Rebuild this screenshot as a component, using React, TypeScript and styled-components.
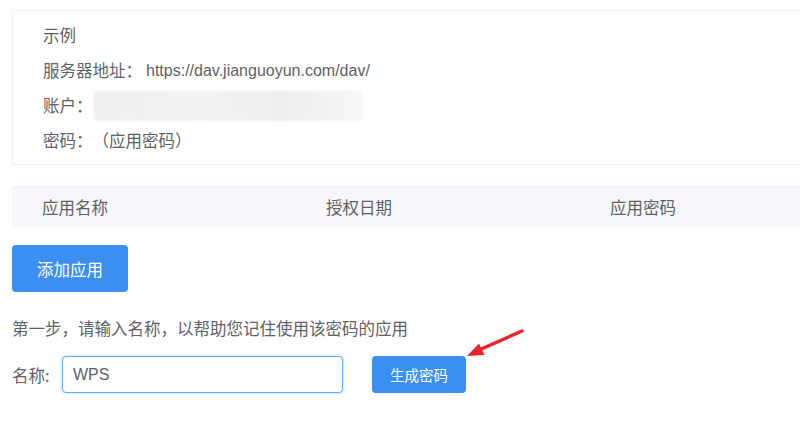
import React from "react";
import styled, { createGlobalStyle } from "styled-components";

const GlobalStyle = createGlobalStyle`
  html, body {
    margin: 0;
    padding: 0;
    background: #fff;
    overflow: hidden;
  }
  body {
    font-family: "Noto Sans CJK SC", "Noto Sans", "Liberation Sans", sans-serif;
    color: #606266;
    text-spacing-trim: space-all;
  }
`;

const App: React.FC = () => {
  return (
    <>
      <GlobalStyle />
      <Page>
        <ExampleBox>
          <Line>示例</Line>
          <Line>
            服务器地址：<Url>https://dav.jianguoyun.com/dav/</Url>
          </Line>
          <Line>
            账户：<Blurred />
          </Line>
          <Line>密码：（应用密码）</Line>
        </ExampleBox>

        <TableHead>
          {columns.map((c) => (
            <HeadCell key={c}>{c}</HeadCell>
          ))}
        </TableHead>

        <AddButton>添加应用</AddButton>

        <StepText>第一步，请输入名称，以帮助您记住使用该密码的应用</StepText>

        <NameRow>
          <Label>名称:</Label>
          <NameInput defaultValue="WPS" />
          <GenButton>生成密码</GenButton>
          <Arrow width="70" height="40" viewBox="0 0 70 40">
            <line x1="60" y1="5" x2="17" y2="24" stroke="#e8242b" strokeWidth="3.5" strokeLinecap="round" />
            <polygon points="5,30 17,17.5 22.5,29" fill="#e8242b" />
          </Arrow>
        </NameRow>
      </Page>
    </>
  );
};

const columns = ["应用名称", "授权日期", "应用密码"];

const Page = styled.div`
  width: 800px;
  height: 436px;
  padding: 10px 0 0 12px;
  box-sizing: border-box;
  overflow: hidden;
  display: flex;
  flex-direction: column;
  align-items: flex-start;
  font-size: 16.5px;
`;

const ExampleBox = styled.div`
  width: 820px;
  box-sizing: border-box;
  border: 1px solid #eff0f2;
  border-radius: 2px;
  padding: 7px 30px 6px;
`;

const Line = styled.div`
  height: 35px;
  line-height: 35px;
  display: flex;
  align-items: center;
`;

const Url = styled.span`
  margin-left: 4px;
  font-family: "Liberation Sans", Arial, sans-serif;
  font-size: 16px;
`;

const Blurred = styled.span`
  display: inline-block;
  width: 269px;
  height: 30px;
  margin-left: 1px;
  background: linear-gradient(90deg, #efeff1, #f3f3f5 40%, #eeeef0 70%, #f7f7f8);
  filter: blur(1px);
`;

const TableHead = styled.div`
  margin-top: 21px;
  width: 852px;
  height: 39px;
  background: #f5f7fa;
  border-top: 1px solid #eef0f3;
  display: grid;
  grid-template-columns: repeat(3, 284px);
  align-items: center;
`;

const HeadCell = styled.div`
  padding-left: 30px;
  color: #606266;
`;

const AddButton = styled.button`
  margin-top: 19px;
  width: 116px;
  height: 47px;
  border: none;
  border-radius: 4px;
  background: #3a8ff0;
  color: #fff;
  font-family: inherit;
  font-size: 16.5px;
`;

const StepText = styled.div`
  margin-top: 24px;
  line-height: 24px;
`;

const NameRow = styled.div`
  position: relative;
  margin-top: 16px;
  display: flex;
  align-items: center;
`;

const Label = styled.span`
  width: 50px;
`;

const NameInput = styled.input`
  width: 281px;
  height: 37px;
  box-sizing: border-box;
  border: 1px solid #66aaf5;
  border-radius: 4px;
  box-shadow: 0 0 3px rgba(64, 158, 255, 0.45);
  padding: 0 10px;
  font-family: "Liberation Sans", Arial, sans-serif;
  font-size: 16px;
  color: #606266;
  outline: none;
`;

const GenButton = styled.button`
  margin-left: 29px;
  width: 94px;
  height: 37px;
  border: none;
  border-radius: 4px;
  background: #3a8ff0;
  color: #fff;
  font-family: inherit;
  font-size: 14.5px;
`;

const Arrow = styled.svg`
  position: absolute;
  left: 450px;
  top: -30px;
`;

export default App;
